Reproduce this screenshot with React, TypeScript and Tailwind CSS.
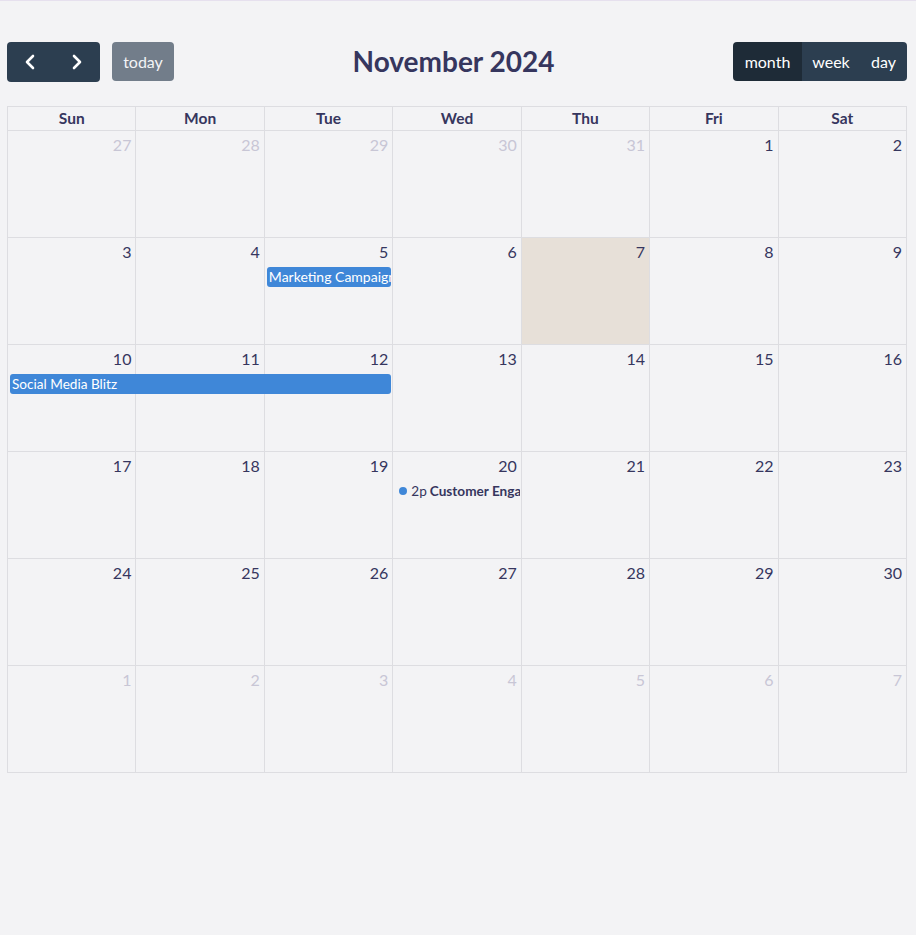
import React from "react";
import { ChevronLeft, ChevronRight } from "lucide-react";

type Day = { n: number; other?: boolean; today?: boolean };

const weeks: Day[][] = [
  [
    { n: 27, other: true },
    { n: 28, other: true },
    { n: 29, other: true },
    { n: 30, other: true },
    { n: 31, other: true },
    { n: 1 },
    { n: 2 },
  ],
  [{ n: 3 }, { n: 4 }, { n: 5 }, { n: 6 }, { n: 7, today: true }, { n: 8 }, { n: 9 }],
  [{ n: 10 }, { n: 11 }, { n: 12 }, { n: 13 }, { n: 14 }, { n: 15 }, { n: 16 }],
  [{ n: 17 }, { n: 18 }, { n: 19 }, { n: 20 }, { n: 21 }, { n: 22 }, { n: 23 }],
  [{ n: 24 }, { n: 25 }, { n: 26 }, { n: 27 }, { n: 28 }, { n: 29 }, { n: 30 }],
  [
    { n: 1, other: true },
    { n: 2, other: true },
    { n: 3, other: true },
    { n: 4, other: true },
    { n: 5, other: true },
    { n: 6, other: true },
    { n: 7, other: true },
  ],
];

const colStart = [
  "col-start-1",
  "col-start-2",
  "col-start-3",
  "col-start-4",
  "col-start-5",
  "col-start-6",
  "col-start-7",
];

const heads = ["Sun", "Mon", "Tue", "Wed", "Thu", "Fri", "Sat"];

function Week({ days, idx }: { days: Day[]; idx: number }) {
  return (
    <div className="grid grid-cols-7 grid-rows-[29px_20px_1fr] h-[107px]">
      {days.map((d, i) => (
        <div
          key={i}
          className={`${colStart[i]} row-start-1 row-span-3 border-r border-b border-[#dddde1] ${
            d.today ? "bg-[#e7e0d8]" : ""
          } flex justify-end`}
        >
          <span
            className={`pr-[4px] pt-[2px] text-[16px] leading-[24px] ${
              d.other ? "text-[#c8c6d5]" : "text-[#36365e]"
            }`}
          >
            {d.n}
          </span>
        </div>
      ))}
      {idx === 1 && (
        <div className="col-start-3 col-span-1 row-start-2 mx-[2px] rounded-[3px] bg-[#3f87d8] text-white text-[14px] leading-[20px] pl-[2px] overflow-hidden whitespace-nowrap">
          Marketing Campaign
        </div>
      )}
      {idx === 2 && (
        <div className="col-start-1 col-span-3 row-start-2 ml-[2px] mr-[2px] rounded-[3px] bg-[#3f87d8] text-white text-[13.6px] leading-[20px] pl-[2px] overflow-hidden whitespace-nowrap">
          Social Media Blitz
        </div>
      )}
      {idx === 3 && (
        <div className="col-start-4 col-span-1 row-start-2 mx-[2px] flex items-center overflow-hidden whitespace-nowrap text-[13.6px] leading-[20px] text-[#36365e]">
          <span className="mx-[4px] inline-block w-[8px] h-[8px] rounded-full bg-[#3f87d8] shrink-0" />
          <span className="mr-[3px]">2p</span>
          <span className="font-bold">Customer Engagement Webinar</span>
        </div>
      )}
    </div>
  );
}

export default function App() {
  return (
    <div
      className="min-h-screen bg-[#f3f3f5] border-t border-[#e6e0ee]"
      style={{ fontFamily: "Lato, 'Open Sans', sans-serif" }}
    >
      <div className="pl-[7px] pr-[9px] pt-[40px]">
        <div className="flex items-center justify-between h-[41px] mb-[24px]">
          <div className="flex items-center">
            <div className="flex rounded-[4px] bg-[#2c3e50] h-[40px] overflow-hidden">
              <button className="w-[46px] flex items-center justify-center text-white">
                <ChevronLeft size={24} strokeWidth={2.6} />
              </button>
              <button className="w-[47px] flex items-center justify-center text-white">
                <ChevronRight size={24} strokeWidth={2.6} />
              </button>
            </div>
            <button className="ml-[12px] h-[39px] w-[62px] rounded-[4px] bg-[#727d8a] text-[#f3f4f6] text-[16px]">
              today
            </button>
          </div>
          <h2 className="text-[28px] font-bold text-[#36365e] leading-none pb-[1px]">
            November 2024
          </h2>
          <div className="flex rounded-[4px] overflow-hidden h-[39px] text-[16px] text-white">
            <button className="w-[69px] bg-[#1e2b37]">month</button>
            <button className="w-[58px] bg-[#2c3e50]">week</button>
            <button className="w-[47px] bg-[#2c3e50]">day</button>
          </div>
        </div>
        <div className="border-l border-t border-[#dddde1]">
          <div className="grid grid-cols-7">
            {heads.map((h) => (
              <div
                key={h}
                className="border-r border-b border-[#dddde1] h-[24px] pt-[1px] flex items-center justify-center text-[15.5px] font-bold text-[#36365e]"
              >
                {h}
              </div>
            ))}
          </div>
          {weeks.map((w, i) => (
            <Week key={i} days={w} idx={i} />
          ))}
        </div>
      </div>
    </div>
  );
}
